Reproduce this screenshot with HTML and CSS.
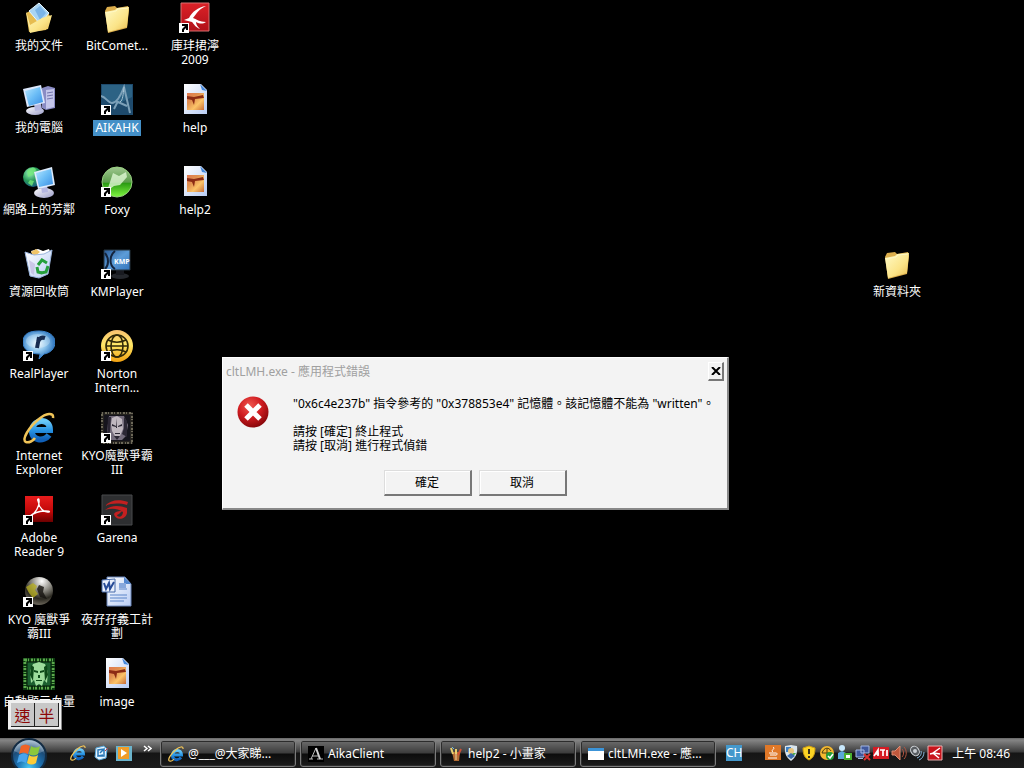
FILE: index.html
```html
<!DOCTYPE html>
<html lang="zh-Hant">
<head>
<meta charset="utf-8">
<title>Desktop</title>
<link rel="stylesheet" href="styles.css">
</head>
<body>
<svg class="defs" width="0" height="0" aria-hidden="true">
  <defs>
    <linearGradient id="folder" x1="0" y1="0" x2="1" y2="1"><stop offset="0" stop-color="#fffbc8"/><stop offset=".6" stop-color="#fbe488"/><stop offset="1" stop-color="#e8bc50"/></linearGradient>
    <linearGradient id="screen" x1="0" y1="0" x2="1" y2="1"><stop offset="0" stop-color="#b4e6ff"/><stop offset=".5" stop-color="#6abcf6"/><stop offset="1" stop-color="#3a8ce2"/></linearGradient>
    <linearGradient id="silver" x1="0" y1="0" x2="1" y2="1"><stop offset="0" stop-color="#ffffff"/><stop offset="1" stop-color="#9a9cc8"/></linearGradient>
    <linearGradient id="paper" x1="0" y1="0" x2="1" y2="1"><stop offset="0" stop-color="#ffffff"/><stop offset="1" stop-color="#b9cdf4"/></linearGradient>
    <linearGradient id="photo" x1="0" y1="0" x2="1" y2="1"><stop offset="0" stop-color="#e07850"/><stop offset=".35" stop-color="#e09050"/><stop offset=".65" stop-color="#fcc468"/><stop offset="1" stop-color="#c86c38"/></linearGradient>
    <linearGradient id="red" x1="0" y1="0" x2="0" y2="1"><stop offset="0" stop-color="#dc2228"/><stop offset="1" stop-color="#b01018"/></linearGradient>
    <linearGradient id="adobe" x1="0" y1="0" x2="0" y2="1"><stop offset="0" stop-color="#e81c1c"/><stop offset=".6" stop-color="#c00808"/><stop offset="1" stop-color="#6c0000"/></linearGradient>
    <radialGradient id="globe" cx=".35" cy=".3" r=".8"><stop offset="0" stop-color="#9cf0c0"/><stop offset=".5" stop-color="#2a9c58"/><stop offset="1" stop-color="#14508c"/></radialGradient>
    <linearGradient id="foxy" x1="0" y1="0" x2="0" y2="1"><stop offset="0" stop-color="#a0c890"/><stop offset=".5" stop-color="#5c9c4c"/><stop offset=".55" stop-color="#2c9c14"/><stop offset="1" stop-color="#80f840"/></linearGradient>
    <radialGradient id="real" cx=".45" cy=".45" r=".6"><stop offset="0" stop-color="#f4fcff"/><stop offset=".45" stop-color="#8cc4ec"/><stop offset="1" stop-color="#1a64b4"/></radialGradient>
    <linearGradient id="gold" x1="0" y1="0" x2="0" y2="1"><stop offset="0" stop-color="#f8c070"/><stop offset=".45" stop-color="#ffe868"/><stop offset="1" stop-color="#f0a010"/></linearGradient>
    <linearGradient id="ieblue" x1="0" y1="0" x2="0" y2="1"><stop offset="0" stop-color="#6ccaf8"/><stop offset=".5" stop-color="#2894e4"/><stop offset="1" stop-color="#1060b8"/></linearGradient>
    <radialGradient id="sphere" cx=".6" cy=".15" r=".9"><stop offset="0" stop-color="#ffffff"/><stop offset=".4" stop-color="#8a8880"/><stop offset=".7" stop-color="#2a2820"/><stop offset="1" stop-color="#7a7468"/></radialGradient>
    <radialGradient id="error" cx=".4" cy=".3" r=".75"><stop offset="0" stop-color="#f05850"/><stop offset=".5" stop-color="#d01c20"/><stop offset="1" stop-color="#800408"/></radialGradient>
    <radialGradient id="orb" cx=".5" cy=".85" r=".85"><stop offset="0" stop-color="#48c8f4"/><stop offset=".4" stop-color="#1c70b0"/><stop offset=".7" stop-color="#1c4c78"/><stop offset="1" stop-color="#b4c8d8"/></radialGradient>
    <linearGradient id="kmp" x1="0" y1="0" x2="1" y2="1"><stop offset="0" stop-color="#2c5c98"/><stop offset=".5" stop-color="#5c9cd8"/><stop offset="1" stop-color="#3474bc"/></linearGradient>

    <symbol id="arrow" viewBox="0 0 10 10"><path fill="#fff" d="M0 0h10v10H0z"/><path fill="#000" d="M3 1h6v6H7V5L5 7v2H3V6l3-3H3z"/></symbol>
    <symbol id="i-folder" viewBox="0 0 32 32"><path fill="#dcae4c" d="M4 9l2-4 8-1 2 2 11-2 1 4-2 18-19 5z"/><path fill="url(#folder)" d="M4 10l10-2 2-2 12-1-2 20-19 5z"/><path stroke="#fff8c4" fill="none" d="M5 11l10-2 2-2 10-1"/></symbol>
    <symbol id="i-docs" viewBox="0 0 32 32"><path fill="#e6bc50" d="M3 11l6-3 4 2 12 1 3 5-5 12-17 2z"/><path fill="#a8d4f4" stroke="#e4f6ff" d="M6 9l10-8 10 10-9 11z"/><path fill="#7ab4e8" d="M12 8l5-4 6 7-6 7z"/><path fill="url(#folder)" d="M3 9l4 14 12-7 10-3-4 14-18 4z"/></symbol>
    <symbol id="i-pc" viewBox="0 0 32 32"><path fill="#8a8cc4" d="M19 4l6-2 7 2v20l-9 2-4-2z"/><path fill="#c4c6ea" d="M23 6l8-1v18l-8 2z"/><path stroke="#7274ac" d="M24 9l6-1M24 12l6-1M24 15l6-1"/><ellipse cx="12" cy="27" rx="9" ry="4" fill="url(#silver)"/><path fill="#b4b6e0" d="M11 20l7-1 1 7-7 1z"/><path fill="#dce8fc" d="M0 5l18-4 4 18-18 4z"/><path fill="url(#screen)" d="M2 7l15-4 3 15-14 4z"/></symbol>
    <symbol id="i-net" viewBox="0 0 32 32"><circle cx="10" cy="11" r="10" fill="url(#globe)"/><path fill="#72e878" opacity=".8" d="M4 5c4-4 8-4 9-1l-3 5-5 2zm3 9l4 1-2 5-4-3z"/><ellipse cx="21" cy="27" rx="10" ry="5" fill="url(#silver)"/><path fill="#b4b6e0" d="M18 20l6-1 1 7-6 1z"/><path fill="#e0ecfc" d="M11 6l18-5 3 18-17 4z"/><path fill="url(#screen)" d="M13 7l15-4 2 15-14 3z"/></symbol>
    <symbol id="i-bin" viewBox="0 0 32 32"><path fill="#fff" d="M8 3l7-2 5 2 6-2 2 5-17 4z"/><path fill="#f0c468" d="M8 4l5-3 4 3-6 5z"/><path fill="url(#paper)" stroke="#9ab4dc" d="M2 4l9 3 10-1 8-4-4 24-9 4-9-2z"/><path fill="#c0b8e0" opacity=".7" d="M6 12l6 4-1 11-3-2z"/><g fill="none" stroke="#26a03c" stroke-width="3"><path d="M15 17l4-5 5 3M25 18l-2 6-5 1M14 19l1 5 4 1"/></g></symbol>
    <symbol id="i-real" viewBox="0 0 32 32"><path fill="url(#real)" stroke="#3c84cc" d="M16 1c10 0 16 5 16 11 0 7-5 11-11 12l-5 5 1-5C7 24 0 20 0 12S6 1 16 1z"/><ellipse cx="15" cy="11" rx="12" ry="7" fill="#fff" opacity=".25"/><path fill="none" stroke="#182c50" stroke-width="4" d="M14 18l2-11M15 12c1-4 4-5 7-4"/></symbol>
    <symbol id="i-ie" viewBox="0 0 32 32"><path fill="none" stroke="url(#ieblue)" stroke-width="6" d="M9 18h18c0-12-16-12-18 0-1 11 12 12 17 5"/><path fill="none" stroke="#f0c458" stroke-width="2.5" d="M30 6c1-6-7-5-14 1C6 15-2 28 3 30c3 1 7-1 9-4"/></symbol>
    <symbol id="i-adobe" viewBox="0 0 32 32"><path fill="url(#adobe)" d="M2 2h28v26H2z"/><path fill="none" stroke="#fff" stroke-width="1.3" d="M7 22c5-2 10-10 9-16 0-2-2-1-1 1 1 7 6 12 11 11 3-1-10-3-19 4"/></symbol>
    <symbol id="i-sphere" viewBox="0 0 32 32"><circle cx="16" cy="15" r="14" fill="url(#sphere)"/><path fill="#b8b020" opacity=".75" d="M3 11l7-4 4 3-2 4 3 4-5 4-4-5z"/><path fill="#14120e" opacity=".8" d="M16 9l5 2-1 5 4 7-7-2-3-8z"/></symbol>
    <symbol id="i-green" viewBox="0 0 32 32"><path fill="#0c3810" d="M0 0h32v32H0z"/><path fill="none" stroke="#5ca84c" stroke-dasharray="2 1 1 2" stroke-width="3" d="M2 2h28v28H2z"/><path fill="#1c6030" stroke="#041c08" d="M4 4h24v24H4z"/><path fill="#9cdc9c" d="M10 6l6-2 6 2 3 8-1 11-3-3-2 6-3-2-3 2-2-6-3 3-1-12z"/><path fill="#0c4818" d="M11 12l4 1v2l-4-1zm10 0l-4 1v2l4-1zM15 17h2v3h-2zm-2 5h6v1h-6zM8 7l3 2-1 14-3-6zm16 0l-3 2 1 14 3-6z"/></symbol>
    <symbol id="i-aika" viewBox="0 0 32 32"><path fill="#1e4a6c" d="M0 0h32v31H0z"/><path fill="#2c6284" d="M1 1h30v12l-14 7L1 14z"/><path fill="none" stroke="#7ca0b8" stroke-width="2" d="M0 12c5 1 7 7 11 7 5 0 9-8 12-16l6 26M17 17l-4 8M17 18l9 4"/><path fill="none" stroke="#a8c4d4" d="M23 3c-1 8-1 13-4 15"/></symbol>
    <symbol id="i-foxy" viewBox="0 0 32 32"><circle cx="16" cy="16" r="15" fill="url(#foxy)" stroke="#98d080"/><path fill="#e0f8d4" opacity=".8" d="M6 25l4-12 2-6 6 3 7-4 1 5-7 8-6 1z"/></symbol>
    <symbol id="i-kmp" viewBox="0 0 32 32"><ellipse cx="19" cy="28" rx="9" ry="3" fill="#24272c"/><path fill="#181a20" d="M15 22h8v5h-8z"/><path fill="url(#kmp)" stroke="#27343f" d="M3 2h26v20H3z"/><path fill="none" stroke="#14243c" stroke-width="2" d="M4 5c4 5 4 12 0 16M14 3c-6 5-6 14 0 18"/><text x="13" y="16" class="kmp-text">KMP</text></symbol>
    <symbol id="i-norton" viewBox="0 0 32 32"><circle cx="16" cy="16" r="16" fill="url(#gold)"/><g fill="none" stroke="#302808" stroke-width="1.6"><circle cx="16" cy="16" r="11"/><ellipse cx="16" cy="16" rx="6" ry="11"/><path d="M5 16h22M7 10c6 3 12 3 18 0M7 22c6-3 12-3 18 0"/></g></symbol>
    <symbol id="i-war" viewBox="0 0 32 32"><path fill="#24221e" d="M0 0h32v32H0z"/><path fill="none" stroke="#6c6858" stroke-dasharray="1 2 2 1" stroke-width="2" d="M1 1h30v30H1z"/><path fill="#15141c" d="M3 3h26v26H3z"/><path fill="#746c7c" d="M8 4h15l4 9-2 11-4 4H10l-4-9z"/><path fill="#c0b8c0" d="M11 6l5-2 5 3 1 10-3 7-4 2-4-7-1-7z"/><path fill="#2b2734" d="M11 12l4 2v1l-4-1zm6 2l4-2v2l-4 1zM14 21h5v1h-5zM7 5h3L9 20l-3 5zm16 0l3 4v16l-5-3 2-6zM15 6l1 10h-1zM13 24h6l-3 4z"/></symbol>
    <symbol id="i-garena" viewBox="0 0 32 32"><path fill="#2e2f31" stroke="#484a4c" d="M1 1h30v30H1z"/><g fill="#c42020"><path d="M4 12c5-6 14-7 23-4l-1 3C18 9 11 9 4 12z"/><path d="M4 16c6-5 14-5 22-2v5c-1 7-12 8-13 1 2-3 5-3 8-3l-3 3-2 1c1 3 6 2 6-3-6-4-12-4-18-2z"/></g></symbol>
    <symbol id="i-word" viewBox="0 0 32 32"><path fill="url(#paper)" stroke="#6884b8" d="M6 1h18l6 7v22H6z"/><path fill="#5488d0" d="M23 1l7 7h-7z"/><path stroke="#5a84c8" d="M18 13h8M9 19h17M9 22h17M9 25h14"/><path fill="#88a8dc" d="M18 7h7v5h-7z"/><path fill="#eaf0fc" stroke="#4468a8" d="M1 4l13-1v13H1z"/><path fill="none" stroke="#284c98" stroke-width="2" d="M3 7l2 6 3-6 1 6 4-7"/></symbol>
    <symbol id="i-image" viewBox="0 0 32 32"><path fill="url(#paper)" d="M5 0h17l6 6v24H5z"/><path fill="#4488dc" d="M21 0l7 7-5-1z"/><path fill="url(#photo)" d="M8 9h17v17H8z"/><path fill="#8c2c14" d="M8 12l7 1 9-2 1 3-9 1-1 6-2-5-5-1z"/></symbol>
    <symbol id="i-bird" viewBox="0 0 32 32"><path fill="url(#red)" stroke="#d87070" d="M2 1h28v28H2z"/><path fill="#fff" d="M27 4c-8 1-14 6-17 12l-5 2 8 2c2 2 3 5 8 7-3-3-4-5-4-7 4 2 7 2 10 0-6 0-10-3-13-4 4-5 6-9 13-12z"/></symbol>
    <symbol id="i-error" viewBox="0 0 32 32"><circle cx="16" cy="16" r="15.5" fill="url(#error)"/><path stroke="#fff" stroke-width="5" d="M9 9l14 14M23 9L9 23"/></symbol>
  </defs>
</svg>

<main class="desktop">
  <nav class="icons" aria-label="Desktop">
    <a class="item" href="#"><svg class="pic"><use href="#i-docs"/></svg><span class="label">我的文件</span></a>
    <a class="item" href="#"><svg class="pic"><use href="#i-pc"/></svg><span class="label">我的電腦</span></a>
    <a class="item" href="#"><svg class="pic"><use href="#i-net"/></svg><span class="label">網路上的芳鄰</span></a>
    <a class="item" href="#"><svg class="pic"><use href="#i-bin"/></svg><span class="label">資源回收筒</span></a>
    <a class="item" href="#"><svg class="pic"><use href="#i-real"/><use href="#arrow" x="0" y="21" width="10" height="10"/></svg><span class="label">RealPlayer</span></a>
    <a class="item" href="#"><svg class="pic"><use href="#i-ie"/></svg><span class="label">Internet<br>Explorer</span></a>
    <a class="item" href="#"><svg class="pic"><use href="#i-adobe"/><use href="#arrow" x="0" y="21" width="10" height="10"/></svg><span class="label">Adobe<br>Reader 9</span></a>
    <a class="item" href="#"><svg class="pic"><use href="#i-sphere"/><use href="#arrow" x="0" y="21" width="10" height="10"/></svg><span class="label">KYO 魔獸爭<br>霸III</span></a>
    <a class="item" href="#"><svg class="pic"><use href="#i-green"/></svg><span class="label">自動顯示血量</span></a>

    <a class="item" href="#"><svg class="pic"><use href="#i-folder"/></svg><span class="label">BitComet...</span></a>
    <a class="item" href="#"><svg class="pic"><use href="#i-aika"/><use href="#arrow" x="0" y="21" width="10" height="10"/></svg><span class="label selected">AIKAHK</span></a>
    <a class="item" href="#"><svg class="pic"><use href="#i-foxy"/><use href="#arrow" x="0" y="21" width="10" height="10"/></svg><span class="label">Foxy</span></a>
    <a class="item" href="#"><svg class="pic"><use href="#i-kmp"/><use href="#arrow" x="0" y="21" width="10" height="10"/></svg><span class="label">KMPlayer</span></a>
    <a class="item" href="#"><svg class="pic"><use href="#i-norton"/><use href="#arrow" x="0" y="21" width="10" height="10"/></svg><span class="label">Norton<br>Intern...</span></a>
    <a class="item" href="#"><svg class="pic"><use href="#i-war"/><use href="#arrow" x="0" y="21" width="10" height="10"/></svg><span class="label">KYO魔獸爭霸<br>III</span></a>
    <a class="item" href="#"><svg class="pic"><use href="#i-garena"/><use href="#arrow" x="0" y="21" width="10" height="10"/></svg><span class="label">Garena</span></a>
    <a class="item" href="#"><svg class="pic"><use href="#i-word"/></svg><span class="label">夜孖孖義工計<br>劃</span></a>
    <a class="item" href="#"><svg class="pic"><use href="#i-image"/></svg><span class="label">image</span></a>

    <a class="item" href="#"><svg class="pic"><use href="#i-bird"/><use href="#arrow" x="0" y="21" width="10" height="10"/></svg><span class="label">庫玤捃濘<br>2009</span></a>
    <a class="item" href="#"><svg class="pic"><use href="#i-image"/></svg><span class="label">help</span></a>
    <a class="item" href="#"><svg class="pic"><use href="#i-image"/></svg><span class="label">help2</span></a>
  </nav>
  <a class="item loose" href="#"><svg class="pic"><use href="#i-folder"/></svg><span class="label">新資料夾</span></a>

  <section class="dialog" role="alertdialog" aria-labelledby="dialog-title" aria-describedby="dialog-text">
    <header class="title-bar">
      <h1 class="title" id="dialog-title">cltLMH.exe - 應用程式錯誤</h1>
      <button class="close" type="button" aria-label="關閉"><svg width="10" height="8" viewBox="0 0 10 8"><path stroke="#000" stroke-width="2" d="M1 0l8 8M9 0L1 8"/></svg></button>
    </header>
    <div class="message">
      <svg class="pic"><use href="#i-error"/></svg>
      <div class="message-text" id="dialog-text">
        <p>"0x6c4e237b" 指令參考的 "0x378853e4" 記憶體。該記憶體不能為 "written"。</p>
        <p>請按 [確定] 終止程式<br>請按 [取消] 進行程式偵錯</p>
      </div>
    </div>
    <div class="actions">
      <button class="push" type="button">確定</button>
      <button class="push" type="button">取消</button>
    </div>
  </section>

  <div class="ime"><button class="ime-key" type="button">速</button><button class="ime-key" type="button">半</button></div>
</main>

<footer class="taskbar">
  <button class="start" type="button" aria-label="開始"><svg width="38" height="38" viewBox="0 0 38 38"><circle cx="19" cy="18" r="17" fill="url(#orb)" stroke="#132c44" stroke-width="2"/><path fill="#fff" opacity=".25" d="M4 13C8-1 30-1 34 13 25 18 13 17 4 13z"/><path fill="#f06428" d="M11 8c3-2 6-2 9 0l-2 8c-3-2-6-2-9 0z"/><path fill="#8cc83c" d="M21 8c3 2 6 2 9 0l-2 8c-3 2-6 2-9 0z"/><path fill="#48a4ec" d="M9 17c3-2 6-2 9 0l-2 8c-3-2-6-2-9 0z"/><path fill="#fccc38" d="M19 17c3 2 6 2 9 0l-2 8c-3 2-6 2-9 0z"/></svg></button>
  <div class="quick">
    <button class="mini" type="button" aria-label="Internet Explorer"><svg class="small"><use href="#i-ie"/></svg></button>
    <button class="mini" type="button" aria-label="顯示桌面"><svg class="small" viewBox="0 0 16 16"><path fill="#e8f6ff" stroke="#58a8dc" d="M3 3l8-2 3 3-1 9-7 2-4-3z"/><path fill="none" stroke="#2878b8" stroke-width="1.5" d="M11 4L5 5v6l5-1M7 8l4-4v7H7"/><path stroke="#c83c3c" d="M12 6l3-3"/></svg></button>
    <button class="mini" type="button" aria-label="Media Player"><svg class="small" viewBox="0 0 16 16"><path fill="#6cb4cc" d="M0 1h16v15H0z"/><path fill="#f09c28" d="M2 2h11v12H2z"/><path fill="#fff" d="M5 4l6 4-6 4z"/></svg></button>
    <button class="mini more" type="button" aria-label="更多"><svg width="9" height="7" viewBox="0 0 9 7"><path fill="none" stroke="#fff" stroke-width="1.5" d="M1 1l3 2.5L1 6M5 1l3 2.5L5 6"/></svg></button>
  </div>
  <div class="tasks">
    <button class="task" type="button"><svg class="small"><use href="#i-ie"/></svg><span>@___@大家睇...</span></button>
    <button class="task" type="button"><svg class="small" viewBox="0 0 16 16"><path d="M0 0h16v16H0z"/><path fill="none" stroke="#b8b8b8" d="M3 13L8 2M4 10h6M1 13h4M9 13h6"/><path fill="none" stroke="#d0d0d0" stroke-width="2" d="M8 2l4 11"/></svg><span>AikaClient</span></button>
    <button class="task" type="button"><svg class="small" viewBox="0 0 16 16"><path fill="#b46c34" d="M4 6h8l-1 9H6z"/><path stroke="#e8d070" stroke-width="2" d="M5 8L3 2M8 8V3"/><path stroke="#cc5038" stroke-width="2" d="M10 9l3-6"/><path stroke="#6ab4dc" d="M6 3L4 1"/><path stroke="#efd6a2" d="M8 8v6"/></svg><span>help2 - 小畫家</span></button>
    <button class="task" type="button"><svg class="small" viewBox="0 0 16 16"><path fill="#fff" d="M0 2h16v12H0z"/><path fill="#3c94d8" d="M0 2h16v3H0z"/></svg><span>cltLMH.exe - 應...</span></button>
  </div>
  <button class="lang" type="button">CH</button>
  <div class="tray">
    <svg class="small" viewBox="0 0 16 16"><path fill="#e07828" d="M0 0h16v15H0z"/><path fill="none" stroke="#fff" d="M8 2c3 2-3 3 0 5M4 8h7c2 0 1 3-1 2M5 10h5M3 13h9"/></svg>
    <svg class="small" viewBox="0 0 16 16"><path fill="#d8e4ec" d="M2 1l6-1 6 1c1 8-2 12-6 15C4 13 1 9 2 1z"/><path fill="#3c80c8" d="M3 2h5v5H3z"/><path fill="#48a848" d="M9 8h4l-5 6z"/><circle cx="8" cy="6" r="3" fill="#e8c47c"/><path fill="#3c6caf" d="M4 11l4-3 4 3-4 3z"/></svg>
    <svg class="small" viewBox="0 0 16 16"><path fill="#fcd424" stroke="#cc9c14" d="M8 1l6 2c0 7-2 10-6 12C4 13 2 10 2 3z"/><path fill="#383018" d="M7 4h2v5H7zm0 7h2v2H7z"/></svg>
    <svg class="small" viewBox="0 0 16 16"><circle cx="8" cy="8" r="7" fill="#f4b830"/><path fill="none" stroke="#504010" d="M3 8c2-6 7-6 9-2M8 3v8M3 8h9"/><circle cx="11" cy="11" r="4" fill="#249c38"/><path fill="none" stroke="#fff" stroke-width="1.5" d="M9 11l2 2 3-4"/></svg>
    <svg class="small" viewBox="0 0 16 16"><circle cx="5" cy="3" r="3" fill="#c8e8fc"/><path fill="#5ca8d8" d="M1 14V8l4-2 4 2v6z"/><path fill="#48b030" d="M7 8h8v7H7z"/><path fill="#fff" d="M9 10h4v3H9z"/></svg>
    <svg class="small" viewBox="0 0 16 16"><path fill="#40589c" stroke="#a4b8e4" d="M6 1h8v7H6zM1 5h8v7H1z"/><path fill="#a4b8e4" d="M3 13h5v1H3z"/><path stroke="#d83434" stroke-width="2" d="M9 9l6 6M15 9l-6 6"/></svg>
    <svg class="small" viewBox="0 0 16 16"><path fill="#d41c24" d="M0 2h16v12H0z"/><path fill="none" stroke="#fff" stroke-width="1.7" d="M1 11l4-6v6M3 9h3M7 5h5M10 5v6M14 5v6"/></svg>
    <svg class="small" viewBox="0 0 16 16"><path fill="#c0583c" stroke="#dc8c74" d="M1 6h3l5-5v14l-5-5H1z"/><path fill="none" stroke="#b45440" d="M11 4c2 2 2 6 0 8M13 2c3 3 3 9 0 12"/></svg>
    <svg class="small" viewBox="0 0 16 16"><ellipse cx="6" cy="6" rx="4" ry="5" transform="rotate(-35 6 6)" fill="#585c60" stroke="#d8dce0"/><circle cx="6" cy="6" r="2" fill="#c8ccd0"/><path fill="none" stroke="#8cb8dc" d="M12 6c1 3-1 6-4 7M15 7c0 4-2 7-5 8"/></svg>
    <svg class="small" viewBox="0 0 16 16"><path fill="#c8141c" stroke="#e8b0b0" d="M1 1h14v14H1z"/><path fill="none" stroke="#fff" stroke-width="1.5" d="M13 3L6 8l6 5M3 9l4-1 6 1"/></svg>
  </div>
  <time class="clock">上午 08:46</time>
</footer>
</body>
</html>
```
FILE: styles.css
```css
* { box-sizing: border-box; }
body {
  margin: 0;
  min-height: 100vh;
  display: flex;
  flex-direction: column;
  background: #000;
  color: #fff;
  font: 12px/14px "Noto Sans", "Noto Sans CJK TC", sans-serif;
}
button { font: inherit; color: inherit; padding: 0; border: 0; background: none; }
.defs { position: absolute; }
.desktop { flex: 1; position: relative; overflow: hidden; }
.icons {
  display: grid;
  grid-auto-flow: column;
  grid-template-rows: repeat(9, 82px);
  grid-auto-columns: 76px;
  column-gap: 2px;
  padding-left: 1px;
}
.item {
  display: flex;
  flex-direction: column;
  align-items: center;
  gap: 4px;
  padding-top: 2px;
  color: #fff;
  text-decoration: none;
  text-align: center;
  white-space: nowrap;
}
.pic { width: 32px; height: 32px; flex: none; }
.small { width: 16px; height: 16px; flex: none; }
.label { padding: 1px 2px; }
.selected { background: #4490c8; }
.loose { position: absolute; left: 859px; top: 246px; width: 76px; }
.kmp-text { font: bold 7px "Open Sans", sans-serif; fill: #fff; }

.dialog {
  position: absolute;
  left: 222px;
  top: 357px;
  width: 507px;
  padding: 4px 3px 12px;
  background: #f3f3f3;
  color: #000;
  border: 1px solid #fff;
  border-right: 2px solid #888;
  border-bottom: 2px solid #888;
}
.title-bar { display: flex; justify-content: space-between; align-items: center; }
.title { margin: 0; font-size: 12px; font-weight: normal; line-height: 18px; color: #a0a0a0; }
.close {
  width: 16px;
  height: 19px;
  display: flex;
  align-items: center;
  justify-content: center;
  border: 1px solid #fff;
  border-right: 2px solid #777;
  border-bottom: 2px solid #777;
}
.message { display: flex; gap: 24px; padding: 15px 0 0 11px; }
.message-text { padding-top: 1px; white-space: nowrap; }
.message-text p { margin: 0 0 14px; }
.actions { display: flex; justify-content: center; gap: 7px; padding-top: 3px; }
.push {
  width: 88px;
  height: 26px;
  border: 1px solid #ddd;
  border-right: 2px solid #777;
  border-bottom: 2px solid #777;
  box-shadow: inset 1px 1px #fff;
}

.ime {
  position: absolute;
  left: 8px;
  top: 700px;
  display: flex;
  padding: 3px 2px 2px 3px;
  background: #f0f0f0;
  border-right: 1px solid #888;
  border-bottom: 1px solid #888;
}
.ime-key {
  width: 24px;
  height: 24px;
  background: #c8c8c8;
  color: #8c0808;
  font: 16px/20px "Noto Sans CJK TC", sans-serif;
  border-right: 1px solid #222;
  border-bottom: 1px solid #222;
}

.taskbar {
  height: 30px;
  display: flex;
  align-items: center;
  padding: 0 14px 0 10px;
  background: linear-gradient(#666 0, #858585 2px, #606060 8px, #3a3a3a 14px, #151515 15px, #1c1c1c 100%);
}
.start { width: 38px; height: 30px; overflow: hidden; }
.start svg { display: block; }
.quick { display: flex; align-items: center; gap: 7px; margin-left: 22px; }
.mini { display: flex; }
.more { margin: -10px 0 0 4px; }
.tasks { flex: 1; display: flex; gap: 4px; margin-left: 8px; max-width: 556px; }
.task {
  flex: 1 1 0;
  min-width: 0;
  height: 27px;
  display: flex;
  align-items: center;
  gap: 4px;
  padding: 2px 7px 0;
  white-space: nowrap;
  overflow: hidden;
  border: 1px solid #7c7c7c;
  border-radius: 3px;
  box-shadow: inset 0 0 0 1px #2c2c2c;
  background: linear-gradient(#6c6c6c, #3c3c3c 48%, #0c0c0c 52%, #1c1c1c);
}
.lang { margin-left: 10px; height: 16px; background: #4498cc; }
.tray { display: flex; gap: 2px; margin-left: auto; }
.clock { margin-left: 9px; padding-top: 2px; white-space: nowrap; }
```
